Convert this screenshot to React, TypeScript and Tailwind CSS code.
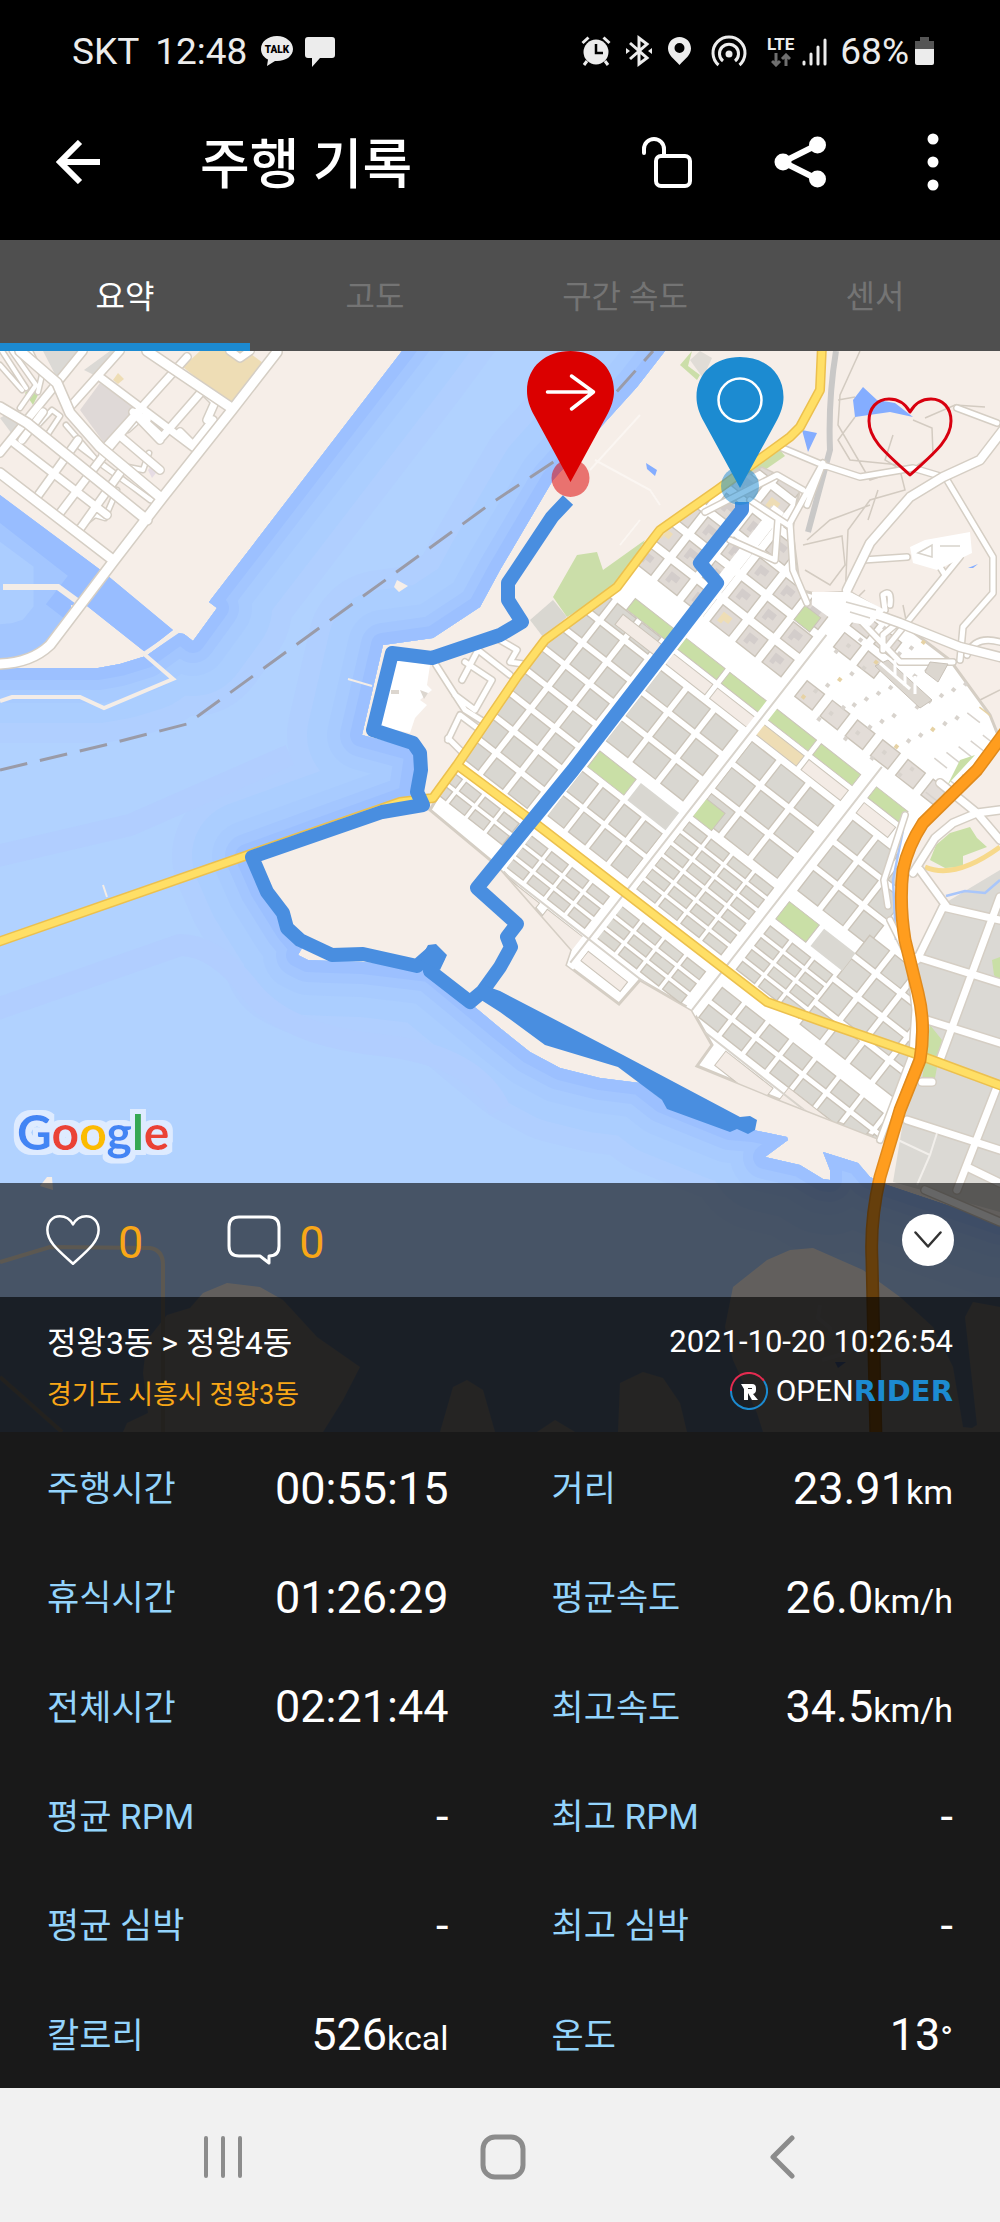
import React from "react";

const FONT = "font-['Roboto','Noto_Sans_CJK_KR',sans-serif]";

type Zone = [number, number, number, number, number, number, number, string];

/* x0, x1, y0, y1, pitch x, pitch y, street width, fill - in the street grid's own axes */
const ZONES: Zone[] = [
  [-66, 90, -226, -6, 31, 28, 7, "#d9d7d1"],
  [-6, 90, 8, 40, 24, 16, 5, "#dcd9d3"],
  [102, 208, -200, -104, 35, 32, 7, "#d9d7d1"],
  [102, 208, -72, -6, 27, 31, 6, "#d9d7d1"],
  [218, 330, -200, -100, 37, 33, 7, "#d9d7d1"],
  [346, 440, -200, -104, 32, 32, 7, "#dad8d2"],
  [218, 330, -98, -8, 28, 15, 5, "#dbd9d2"],
  [102, 206, 10, 56, 26, 15, 5, "#dcd9d3"],
  [216, 330, 10, 58, 28, 15, 5, "#dbd9d2"],
  [346, 430, -66, -6, 28, 15, 5, "#dbd9d2"],
  [430, 560, -120, -6, 32, 30, 7, "#dbd9d3"],
  [346, 580, 12, 56, 30, 22, 6, "#dad8d2"],
  [-21, 216, -500, -250, 33, 30, 9, "#e0dad5"],
  [224, 300, -370, -320, 30, 27, 9, "#e3ddd8"],
  [224, 430, -282, -250, 32, 30, 10, "#e3ddd8"],
];

const GREEN_STRIPS = [
  [38, 52],
  [102, 50],
  [158, 48],
  [216, 52],
  [274, 50],
  [344, 40],
];

function Blocks() {
  const out: React.ReactNode[] = [];
  ZONES.forEach(([x0, x1, y0, y1, px, py, gap, fill], z) => {
    for (let y = y0, r = 0; y + py - gap <= y1 + 2; y += py, r++) {
      for (let x = x0, c = 0; x + px - gap <= x1 + 2; x += px, c++) {
        out.push(<rect key={`${z}-${r}-${c}`} x={x} y={y} width={px - gap} height={py - gap} fill={fill} stroke="#cbc4b9" strokeWidth="1.4" />);
        if (z === 12) {
          const k = (r * 7 + c * 5) % 11;
          out.push(<path key={`b-${r}-${c}`} d={`M${x + 5} ${y + 5}h11v7h-6v4h-5z`} fill={k === 3 ? "#eeddb5" : "#d3cdcb"} />);
        }
      }
    }
  });
  for (let i = 0; i < 90; i++) {
    const x = 222 + ((i * 47) % 190);
    const y = -440 + ((i * 31) % 180);
    out.push(<rect key={`s${i}`} x={x} y={y} width={i % 4 === 0 ? 16 : 4} height={i % 4 === 0 ? 1.5 : 4} fill={i % 9 === 0 ? "#e6d2a4" : "#d8d3cd"} />);
  }
  return <>{out}</>;
}

function Roads({ list, w, color = "#fff", edge = "#d5cec4" }: { list: string[]; w: number; color?: string; edge?: string }) {
  const d = list.join(" ");
  return (
    <g fill="none" strokeLinejoin="round" strokeLinecap="round">
      <path d={d} stroke={edge} strokeWidth={w + 3} />
      <path d={d} stroke={color} strokeWidth={w} />
    </g>
  );
}

const SEA =
  "M402 351L209 602L217 608L193 641L184 634L178 633L146 656L120 664L98 668L5 668L-300 672V1800H1300V1223H1000L887 1185L870 1177L858 1163L823 1152L830 1170L830 1180L823 1179L800 1165L765 1157L788 1140L787 1137L753 1130L730 1128L663 1101L640 1083L600 1078L560 1068L530 1052L500 1028L470 1003L430 970L363 962L330 961L308 960L298 955L302 948L287 930L262 890L247 856L410 797L417 750L362 735L383 645L433 638L480 607L500 570L553 480L637 387L665 351L720 270H462Z";
const BAY = "M-200 495H0L102 571L173 630L145 652L87 606L71 605L71 620L45 652L20 660L0 662H-200Z";
const CITY =
  "M457 765L517 677L545 640L617 587L647 547L675 520L717 492L762 468L800 486L792 530L800 590L815 594L850 592L900 622L950 660L990 715L1000 740L975 770L923 823L903 870L900 903L905 940L918 993L923 1027L913 1060L900 1110L882 1140L775 1098L697 1066L712 1045L692 1010L640 980L619 1004L567 965L572 950L500 868L430 810Z";
const ROUTE =
  "M568 500L552 517L508 583L508 600L522 622L500 635L432 658L392 653L373 730L413 743L420 753L421 770L417 792L423 805L382 812L252 857L267 892L283 913L287 928L300 940L332 955L363 954L417 966L433 952L438 957L430 971L470 1002L482 992L500 967L511 947L507 937L517 924L477 888L573 770L717 583L700 563L742 510L742 502";

const PIN = "M0 131L-36 65C-41 56-43.500 48-43.500 40C-43.500 15-24 0 0 0C24 0 43.500 15 43.500 40C43.500 48 41 56 36 65Z";

function MapDrawing() {
  return (
    <svg className="absolute inset-0 h-full w-full" viewBox="0 351 1000 1081" preserveAspectRatio="xMidYMin slice" role="img" aria-label="주행 경로 지도">
      <defs>
        <clipPath id="sea"><path d={SEA} /></clipPath>
        <clipPath id="bay"><path d={BAY} /></clipPath>
        <clipPath id="city"><path d={CITY} /></clipPath>
      </defs>
      <rect y="351" width="1000" height="1081" fill="#f6eee8" />

      <g clipPath="url(#sea)" fill="none" strokeLinejoin="round">
        <path d={SEA} fill="#b1d2ff" />
        <path d={SEA} stroke="#b0cfff" strokeWidth="150" />
        <path d={SEA} stroke="#abceff" strokeWidth="110" />
        <path d={SEA} stroke="#a8cbff" strokeWidth="70" />
        <path d={SEA} stroke="#a3c6ff" strokeWidth="44" />
        <path d={SEA} stroke="#9cc0ff" strokeWidth="24" />
        <path d="M-20 860L130 825L290 755M-20 1015L180 945Q215 945 250 990T380 1045T500 1110" stroke="#b1ceff" strokeWidth="22" />
      </g>
      <g clipPath="url(#bay)" fill="none">
        <path d={BAY} fill="#abcdff" />
        <path d={BAY} stroke="#a3c6ff" strokeWidth="75" />
        <path d="M-5 490L175 630L145 652L60 586" stroke="#98bdff" strokeWidth="46" />
      </g>
      <g fill="none" stroke="#f4ede7" strokeWidth="4">
        <path d="M3 587H58L84 606" strokeWidth="6" />
        <path d="M178 631L144 654L173 679L104 708L80 697H12L0 701" />
        <path d="M103 885L107 897M348 679L372 686" strokeWidth="2" />
      </g>
      <path d="M397 580L408 586L399 592L394 587ZM47 1177L52 1177L53 1190L40 1186Z" fill="#f6eee8" />
      <path d="M0 770L105 745L187 724L220 700L493 502L555 461L653 351" fill="none" stroke="#9a9ba8" strokeWidth="3" strokeDasharray="28 13" />

      {/* islands and causeways further south */}
      <path
        d="M227 1283L203 1293L190 1308L167 1315L147 1340L143 1373L148 1413L127 1423L123 1432H323L343 1400L360 1367L317 1337L283 1300L260 1287ZM440 1432L453 1387L467 1380L483 1390L495 1432ZM618 1432L620 1383L643 1372L663 1378L680 1403L687 1432ZM537 1432L555 1420L575 1432ZM763 1432L757 1413L733 1360L725 1327L733 1287L767 1260L790 1250L813 1248L863 1270L900 1297L933 1327L953 1367L963 1427L972 1428L977 1425L965 1317L973 1302L1000 1307V1432Z"
        fill="#f6eee8"
      />
      <path d="M0 1262L50 1247L150 1248Q163 1250 163 1265V1432M0 1377L62 1432" fill="none" stroke="#e6dccb" strokeWidth="4" />
      <path d="M820 1305L818 1318L830 1328L828 1340M822 1360L850 1352L866 1340" fill="none" stroke="#fff" strokeWidth="4" opacity=".6" />
      <path d="M835 1362L846 1362L838 1368Z" fill="#7faaff" />

      {/* north-west district */}
      <path d="M183 367L200 351H247L263 363L230 405Z" fill="#eeddb5" />
      <path d="M80 410L100 383L137 410L107 447Z" fill="#dfd9d7" />
      <path d="M43 351H80L58 380ZM0 418L14 410L24 425L12 434ZM84 370L110 351H120L100 378Z" fill="#dbd9d5" />
      <path d="M25 393L32 386L38 395L33 405Z" fill="#c5dea3" />
      <path d="M113 380L118 373L124 379L118 384Z" fill="#eeddb5" />
      <path d="M148 470L154 463L160 468L152 478Z" fill="#e6dce4" />
      <Roads
        w={4}
        list={["M12 351L36 385L20 408M0 365L22 390M30 351L42 375L38 392", "M38 425L52 410L60 416L44 440M86 522L95 515L105 518L117 490", "M128 467L143 470L149 453M128 430L139 420", "M2 351L26 388M66 425L98 462L158 505M76 444L150 500"]}
      />
      <Roads
        w={7}
        list={[
          "M14 443L107 515",
          "M37 497L78 440M60 513L104 455M77 533L122 470M22 440L43 412",
          "M100 377L197 450M143 407L103 455M140 417L162 437L203 390L215 402L207 420M180 432L193 445L213 420",
          "M103 450L187 357M70 407L120 351M0 453L57 383L83 351M147 420L133 412L160 440",
          "M230 351L240 358L250 351M120 436L160 470",
        ]}
      />
      <Roads
        w={9}
        list={["M0 407L27 423L147 520", "M20 351L57 383L70 413L100 447L160 497", "M147 351L230 407", "M0 473L113 560", "M-4 664Q30 664 50 645L113 562L163 497L232 410L277 352"]}
      />

      {/* hills, ponds and parks */}
      <g fill="none" stroke="#d3cbc1" strokeWidth="1.500">
        <path d="M860 351L840 395L838 425L870 480L900 470L905 490L870 500L848 530L845 600M838 400L855 397M855 417L838 440L850 460L900 465M893 435L885 460L905 472M913 420L932 428L933 455L910 470M868 520L878 490M803 545L842 536L845 565L830 585L805 570M807 540L830 520L870 505M985 407L955 405L925 418" />
        <path d="M570 690L548 640M903 605L908 630M865 590L855 600L870 605M980 700L1000 690" />
      </g>
      <path d="M836 351Q828 400 830 450L808 532" fill="none" stroke="#c9c8c7" strokeWidth="6" />
      <path d="M853 400L863 387L877 400L895 403L913 417L890 412L855 417ZM802 430L817 433L808 452ZM646 463L657 470L655 476L647 469ZM968 568L978 564L973 568Z" fill="#84adff" />
      <path d="M553 597L577 555L597 552L603 570L645 540L617 587L567 617ZM640 545L780 450L785 456L665 540ZM680 365L692 351L688 366L700 375L697 380Z" fill="#cbdea9" />
      <path d="M690 360L700 351L712 358L703 378Z" fill="#e0dcd6" />
      <path d="M530 620L553 600L567 617L543 637Z" fill="#d9d7d1" />
      <path d="M590 470L640 415M595 460L650 490L660 505M620 545L640 520" fill="none" stroke="#fbf6f2" strokeWidth="2" />

      {/* harbour */}
      <path d="M397 660L430 665L427 685L432 690L420 700L427 705L415 718L410 733L380 727Z" fill="#fff" />
      <path d="M391 690h8v4h-8zM420 690l8 3-4 6z" fill="#dcd6cf" />
      <Roads
        w={5}
        list={["M436 665L452 690L465 710L500 732M462 680L478 650L510 675M455 695L475 710L492 680L465 662M500 640L517 650L510 662L530 665", "M448 740L460 715L480 730M448 738L462 752"]}
      />

      {/* gridded city */}
      <path d={CITY} fill="#fff" stroke="#d5cec4" strokeWidth="3" />
      <g clipPath="url(#city)">
        <g transform="translate(457 765) rotate(38)">
          <Blocks />
          {GREEN_STRIPS.map(([x, w], i) => (
            <g key={x} stroke="#cbc4b9">
              <rect x={x} y="-241" width={w} height="14" fill="#c9dfa6" />
              <rect x={x} y="-221" width={w} height="13" fill={i === 3 ? "#eeddb5" : "#f3ebe5"} />
            </g>
          ))}
          <g fill="#c9dfa6" stroke="#cbc4b9">
            <rect x="104" y="-99" width="46" height="20" />
            <rect x="217" y="-127" width="24" height="22" />
            <rect x="346" y="-97" width="38" height="22" />
            <rect x="176" y="-340" width="20" height="18" />
          </g>
          <rect x="390" y="-97" width="40" height="22" fill="#dad8d2" />
          <rect x="156" y="-99" width="50" height="22" fill="#d9d7d1" />
          <g fill="#f4ece6" stroke="#cbc4b9">
            <rect x="98" y="58" width="52" height="12" />
            <rect x="160" y="58" width="46" height="20" />
            <rect x="218" y="66" width="50" height="12" />
            <rect x="345" y="64" width="24" height="14" />
            <rect x="388" y="60" width="60" height="18" />
            <rect x="460" y="50" width="60" height="18" />
          </g>
          <g stroke="#fff" strokeWidth="13">
            <path d="M211 -420V92M336 -260V60M96 -400V80" />
          </g>
          <g stroke="#d8d3cb" strokeWidth="2">
            <path d="M211 -330V86M336 -260V50M96 56H330M346 58H560" />
          </g>
        </g>
      </g>

      {/* eastern district */}
      <path d="M945 903L1000 870V1212L893 1182L905 1110L925 1040L925 1000L915 955Z" fill="#dbd9d4" />
      <path d="M930 860L936 845L950 833L970 827L977 838L987 847L963 856L963 867L945 868ZM930 1025L942 1040L935 1078L922 1080ZM992 960L1000 957V982L994 975ZM940 800L960 760L975 755L950 782Z" fill="#c9dfa6" />
      <path d="M946 896L965 891L985 893L1000 880M903 830L893 880L896 940" fill="none" stroke="#a9c6fa" strokeWidth="2.500" />
      <path d="M925 867Q955 880 1000 847" fill="none" stroke="#f7d98b" strokeWidth="5" />
      <Roads
        w={7}
        list={[
          "M1000 897L940 1060",
          "M917 957L1000 983M927 1020L1000 1043M997 1087L957 1190M907 1120L1000 1150M967 1167L1000 1183M925 1190L1000 1222",
          "M947 907L920 870M917 960L943 907L1000 920M913 873L935 838L953 823L977 813L1000 810M940 783L977 813L1000 840",
          "M922 1082L932 1082",
        ]}
      />
      <Roads w={5} list={["M888 906L884 880L905 815M890 920L910 960L915 1010L912 1055L880 1140"]} />
      <path d="M898 1140L930 1155L917 1185M937 1133L930 1155" fill="none" stroke="#f2efeb" strokeWidth="2" />

      {/* north-east roads */}
      <Roads
        w={5}
        list={[
          "M780 447L823 465L860 477L913 468L943 477",
          "M957 408L997 423M947 480L993 557V593L963 627L960 660",
          "M863 560L907 557M960 557L887 647M945 575L937 562",
          "M953 662L900 662L860 620M823 463L790 523L793 570L807 603M705 512L777 475L803 490M750 500L788 525M823 463L807 505",
          "M883 650V635L895 625M967 655Q975 635 1000 642M730 540L775 560L778 520M885 610L883 595Q892 588 890 605",
        ]}
      />
      <Roads w={8} list={["M1003 430L980 460L943 477L910 497L870 543L847 590", "M817 600L850 605L900 623L960 647L1000 657"]} />
      <path d="M910 547L925 540L970 532L972 553L937 570L913 563ZM812 592L850 592L885 610L870 626L830 618L812 605Z" fill="#fff" />
      <path d="M918 553L932 545L932 557ZM940 546h20M846 602l30 8M850 612l20 6" fill="none" stroke="#d8d3cb" strokeWidth="1.500" />
      <path d="M875 666L888 660L932 700L920 708ZM930 662L948 664L938 682L925 672Z" fill="#dcd7d0" stroke="#c9c2b8" />
      <path d="M880 663l30 26M895 660v16M905 668v18M915 676v18" stroke="#fff" strokeWidth="3" />

      {/* arterial roads */}
      <Roads w={7} color="#ffdf66" edge="#ecc04e" list={["M-5 943L245 856L400 802L433 798L457 765L500 702L517 677L545 640L617 587L647 547L660 530L717 490L790 437L800 427L820 390L822 345", "M457 765L527 817L767 1002L823 1022L913 1053L1005 1087"]} />
      <Roads w={10} color="#ff9d1e" edge="#e08a1c" list={["M1008 728L977 770L923 823Q908 846 903 870Q899 903 905 940L918 993Q926 1025 920 1060L900 1110L880 1177Q870 1220 872 1260L876 1440"]} />

      {/* recorded track */}
      <path d={ROUTE} fill="none" stroke="#498ee0" strokeWidth="14" strokeLinejoin="round" />
      <path d="M480 984L500 991L623 1055L740 1117L750 1116L757 1120L755 1130L748 1134L737 1129L730 1132L667 1109L662 1100L618 1067L545 1045L500 1012L478 998ZM420 960L428 945L436 944L447 955L440 970Z" fill="#498ee0" />

      <circle cx="570.500" cy="478" r="19" fill="#dc0000" opacity=".52" />
      <circle cx="740" cy="486" r="19" fill="#1c8bd1" opacity=".52" />
      <g transform="translate(570.500 351)">
        <path d={PIN} fill="#db0000" />
        <path d="M-23 41H23M1 25L23 41L1 58" fill="none" stroke="#fff" strokeWidth="3.500" strokeLinecap="round" strokeLinejoin="round" />
      </g>
      <g transform="translate(740 357)">
        <path d={PIN} fill="#1c8bd1" />
        <circle cy="43" r="21.500" fill="none" stroke="#fff" strokeWidth="2.500" />
      </g>
    </svg>
  );
}

function GoogleLogo() {
  return (
    <svg width="180" height="82" viewBox="0 0 180 82" role="img" aria-label="Google">
      <defs>
        <filter id="halo" x="-10%" y="-20%" width="120%" height="140%">
          <feMorphology in="SourceAlpha" operator="dilate" radius="5" result="d" />
          <feFlood floodColor="#deebff" />
          <feComposite in2="d" operator="in" result="h" />
          <feMerge>
            <feMergeNode in="h" />
            <feMergeNode in="SourceGraphic" />
          </feMerge>
        </filter>
      </defs>
      <text x="4" y="49" filter="url(#halo)" className="font-['Lato'] text-[48px] font-bold">
        <tspan fill="#4285f4">G</tspan>
        <tspan fill="#ea4335">o</tspan>
        <tspan fill="#fbbc05">o</tspan>
        <tspan fill="#4285f4">g</tspan>
        <tspan fill="#34a853">l</tspan>
        <tspan fill="#ea4335">e</tspan>
      </text>
    </svg>
  );
}

function Heart({ className }: { className: string }) {
  return (
    <svg className={className} viewBox="0 0 86 80" fill="none" stroke="currentColor" strokeLinejoin="round" aria-hidden="true">
      <path d="M43 15C38 6 31 2 22 2C10 2 2 11 2 24C2 43 20 57 43 78C66 57 84 43 84 24C84 11 76 2 64 2C55 2 48 6 43 15Z" />
    </svg>
  );
}

function StatusBar() {
  return (
    <div className="flex h-[102px] items-center pr-[66px] pl-[72px] text-[37px] leading-none text-[#ececec]">
      <span>SKT</span>
      <span className="ml-4">12:48</span>
      <svg className="ml-[14px]" width="32" height="32" viewBox="0 0 32 32" role="img" aria-label="TALK">
        <path d="M16 1C7 1 0 6.500 0 14c0 5 3 8.500 7 10.500L6 31l8-5h2c9 0 16-5 16-12S25 1 16 1z" fill="#ececec" />
        <text x="16" y="18" textAnchor="middle" className="text-[10px] font-black" fill="#000">TALK</text>
      </svg>
      <svg className="ml-3" width="30" height="32" viewBox="0 0 30 32" fill="#ececec" aria-hidden="true">
        <path d="M3 2h24a3 3 0 0 1 3 3v15a3 3 0 0 1-3 3H15l-8 9v-9H3a3 3 0 0 1-3-3V5a3 3 0 0 1 3-3z" />
      </svg>
      <div className="ml-auto flex items-center">
        <svg width="30" height="32" viewBox="0 0 30 32" aria-hidden="true">
          <circle cx="15" cy="17" r="12.500" fill="#ececec" />
          <path d="M1.500 8L7.500 2.500M28.500 8L22.500 2.500M6 26l-3 4M24 26l3 4" stroke="#ececec" strokeWidth="3" />
          <path d="M15 9v9h7" fill="none" stroke="#000" strokeWidth="2.500" />
        </svg>
        <svg className="ml-[15px]" width="26" height="32" viewBox="0 0 26 32" fill="none" stroke="#ececec" strokeWidth="3" aria-hidden="true">
          <path d="M4 8l17 15-8 6V3l8 6L4 24" />
          <path d="M0 13l4 3-4 3zM26 13l-4 3 4 3z" fill="#ececec" stroke="none" />
        </svg>
        <svg className="ml-4" width="23" height="32" viewBox="0 0 23 32" fill="#ececec" aria-hidden="true">
          <path fillRule="evenodd" d="M11.500 2C5 2 0 7 0 13.500C0 20 6 24 11.500 30C17 24 23 20 23 13.500C23 7 18 2 11.500 2zM11.500 8a5 5 0 1 1 0 10a5 5 0 0 1 0-10z" />
        </svg>
        <svg className="ml-5" width="36" height="32" viewBox="0 0 36 32" fill="none" stroke="#ececec" strokeWidth="3" aria-hidden="true">
          <circle cx="18" cy="19" r="3.500" fill="#ececec" stroke="none" />
          <path d="M7.500 30A16 16 0 1 1 28.500 30M12 26A9.500 9.500 0 1 1 24 26" />
        </svg>
        <div className="ml-5 flex flex-col items-center">
          <span className="text-[17px] leading-[17px] font-bold">LTE</span>
          <svg width="20" height="14" viewBox="0 0 20 14" fill="none" stroke="#6f6f6f" strokeWidth="3" aria-hidden="true">
            <path d="M5 0v11M1 8l4 4 4-4M15 13V3M11 6l4-4 4 4" />
          </svg>
        </div>
        <svg className="ml-2" width="26" height="32" viewBox="0 0 26 32" stroke="#ececec" strokeWidth="3" strokeLinecap="round" aria-hidden="true">
          <path d="M2 27v2M9 19v10M16 12v17M23 5v24" />
        </svg>
        <span className="ml-3">68%</span>
        <svg className="ml-[6px]" width="19" height="32" viewBox="0 0 19 32" aria-hidden="true">
          <path d="M5 2h9v4h5v8H0V6h5z" fill="#555" />
          <path d="M0 14h19v14a2 2 0 0 1-2 2H2a2 2 0 0 1-2-2z" fill="#ececec" />
        </svg>
      </div>
    </div>
  );
}

function Header() {
  return (
    <header className="flex h-[120px] items-center pr-[61px] pl-[56px] text-white">
      <button aria-label="뒤로">
        <svg width="44" height="44" viewBox="0 0 44 44" fill="none" stroke="currentColor" strokeWidth="6">
          <path d="M44 22H4M24 2L4 22L24 42" />
        </svg>
      </button>
      <h1 className="ml-[100px] pt-2 text-[54px] leading-none font-medium">주행 기록</h1>
      <button className="ml-auto" aria-label="잠금 해제">
        <svg width="50" height="52" viewBox="0 0 50 52" fill="none" stroke="currentColor" strokeWidth="4" strokeLinecap="round">
          <rect x="14" y="20" width="34" height="30" rx="5" />
          <path d="M2 17v-4a10 10 0 0 1 20 0v7" />
        </svg>
      </button>
      <button className="ml-[82px]" aria-label="공유">
        <svg width="52" height="52" viewBox="0 0 52 52" fill="currentColor" stroke="currentColor">
          <path d="M43 9L9 26L43 43" fill="none" strokeWidth="6" />
          <g stroke="none">
            <circle cx="43.500" cy="9" r="8.500" />
            <circle cx="9" cy="26" r="8.500" />
            <circle cx="43.500" cy="43" r="8.500" />
          </g>
        </svg>
      </button>
      <button className="ml-[101px]" aria-label="더보기">
        <svg width="12" height="58" viewBox="0 0 12 58" fill="currentColor">
          <circle cx="6" cy="6" r="5.500" />
          <circle cx="6" cy="29" r="5.500" />
          <circle cx="6" cy="52" r="5.500" />
        </svg>
      </button>
    </header>
  );
}

const TABS = ["요약", "고도", "구간 속도", "센서"];

function Tabs() {
  return (
    <div role="tablist" className="grid h-[111px] grid-cols-4 bg-[#4f4f4f] text-[32px]">
      {TABS.map((t, i) => (
        <button
          key={t}
          role="tab"
          aria-selected={i === 0}
          className={i === 0 ? "border-y-8 border-t-transparent border-b-[#1c8ad1] pt-[2px] text-white" : "border-y-8 border-transparent pt-[2px] text-[#747474]"}
        >
          {t}
        </button>
      ))}
    </div>
  );
}

const STATS: [string, string, string?][] = [
  ["주행시간", "00:55:15"],
  ["거리", "23.91", "km"],
  ["휴식시간", "01:26:29"],
  ["평균속도", "26.0", "km/h"],
  ["전체시간", "02:21:44"],
  ["최고속도", "34.5", "km/h"],
  ["평균 RPM", "-"],
  ["최고 RPM", "-"],
  ["평균 심박", "-"],
  ["최고 심박", "-"],
  ["칼로리", "526", "kcal"],
  ["온도", "13", "°"],
];

export default function App() {
  return (
    <div className={`bg-black ${FONT}`}>
      <StatusBar />
      <Header />
      <div className="pt-[18px]">
        <Tabs />
      </div>

      <main>
        <section className="relative overflow-hidden">
          <MapDrawing />
          <div className="relative flex h-[832px] flex-col items-end justify-between pt-[46px]">
            <button className="mr-[47px] text-[#d8000f]" aria-label="좋아요">
              <Heart className="h-[80px] w-[86px] stroke-3" />
            </button>
            <div className="self-start pl-[13px]">
              <GoogleLogo />
            </div>
          </div>

          <div className="relative flex h-[114px] items-center bg-black/60 pr-[46px] pl-[46px] text-[45px] leading-none text-[#f9a717]">
            <button className="flex items-center" aria-label="좋아요 0">
              <Heart className="h-[50px] w-[54px] stroke-4 text-white" />
              <span className="ml-[18px] pt-1">0</span>
            </button>
            <button className="ml-[84px] flex items-center" aria-label="댓글 0">
              <svg width="54" height="50" viewBox="0 0 54 50" fill="none" stroke="#fff" strokeWidth="3" strokeLinejoin="round" aria-hidden="true">
                <path d="M12 2H42Q52 2 52 12V31Q52 41 42 41V48L33 41H12Q2 41 2 31V12Q2 2 12 2Z" />
              </svg>
              <span className="ml-[18px] pt-1">0</span>
            </button>
            <button className="ml-auto flex h-[52px] w-[52px] items-center justify-center rounded-full bg-white" aria-label="접기">
              <svg width="28" height="18" viewBox="0 0 28 18" fill="none" stroke="#333" strokeWidth="2.500" strokeLinecap="round" strokeLinejoin="round">
                <path d="M1.500 1.500L14 15.500L26.500 1.500" />
              </svg>
            </button>
          </div>

          <div className="relative flex h-[135px] justify-between bg-black/85 px-[47px] pt-[25px] text-white">
            <div>
              <p className="text-[32px] leading-[42px]">정왕3동 &gt; 정왕4동</p>
              <p className="mt-3 text-[27px] leading-[38px] text-[#f9a717]">경기도 시흥시 정왕3동</p>
            </div>
            <div className="flex flex-col items-end">
              <p className="text-[31px] leading-[40px]">2021-10-20 10:26:54</p>
              <div className="mt-2 flex items-center text-[30px] leading-[42px]">
                <svg className="mr-2" width="38" height="38" viewBox="0 0 38 38" fill="none" aria-hidden="true">
                  <path d="M1 19A18 18 0 0 1 34 9" stroke="#e52b50" strokeWidth="2" />
                  <path d="M34 9A18 18 0 1 1 1 19" stroke="#1c8bd1" strokeWidth="2" />
                  <path d="M11 12H22Q26 12 26 16V18Q26 21 23 22L28 28H22L18 21V17H22V16H18V28H14V17Z" fill="#fff" />
                </svg>
                <span>OPEN</span>
                <span className="font-['DejaVu_Sans'] text-[29px] font-bold text-[#1c8bd1]">RIDER</span>
              </div>
            </div>
          </div>
        </section>

        <dl className="grid h-[656px] grid-cols-2 grid-rows-6 gap-x-[103px] bg-[#191919] px-[47px]">
          {STATS.map(([label, value, unit]) => (
            <div key={label} className="flex items-center justify-between pt-[3px]">
              <dt className="pt-[3px] text-[35px] leading-none text-[#94d4fc]">{label}</dt>
              <dd className="text-[45px] leading-none text-white">
                {value}
                {unit && <span className="text-[34px]">{unit}</span>}
              </dd>
            </div>
          ))}
        </dl>
      </main>

      <nav className="flex h-[134px] items-center justify-between bg-[#f1f1f1] pt-1 pr-[194px] pl-[199px] text-[#8c8c8c]">
        <button className="flex w-12 justify-center" aria-label="최근 앱">
          <svg width="40" height="44" viewBox="0 0 40 44" stroke="currentColor" strokeWidth="4" strokeLinecap="round">
            <path d="M3 3v38M20 3v38M37 3v38" />
          </svg>
        </button>
        <button className="flex w-12 justify-center" aria-label="홈">
          <svg width="46" height="46" viewBox="0 0 46 46" fill="none" stroke="currentColor" strokeWidth="5">
            <rect x="3" y="3" width="40" height="40" rx="12" />
          </svg>
        </button>
        <button className="flex w-12 justify-center" aria-label="뒤로 가기">
          <svg width="26" height="44" viewBox="0 0 26 44" fill="none" stroke="currentColor" strokeWidth="5" strokeLinecap="round" strokeLinejoin="round">
            <path d="M23 3L4 22L23 41" />
          </svg>
        </button>
      </nav>
    </div>
  );
}
